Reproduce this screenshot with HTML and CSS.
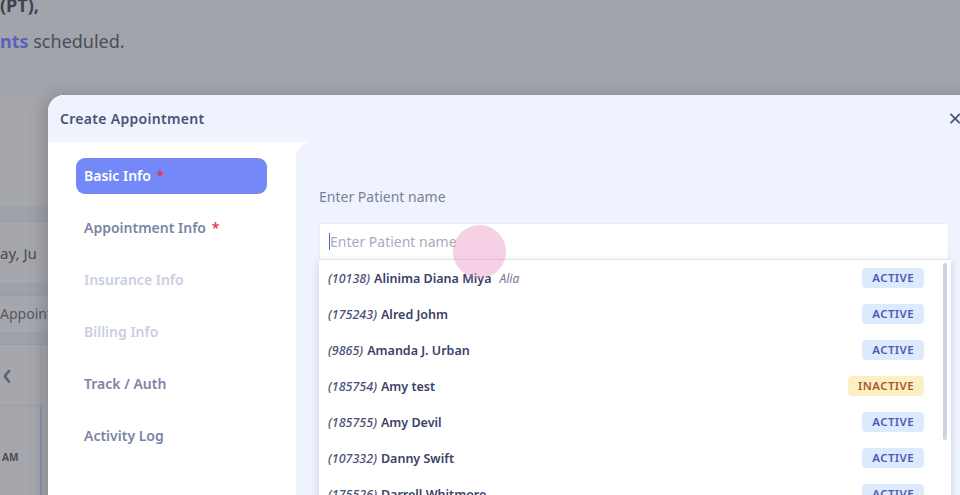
FILE: index.html
```html
<!DOCTYPE html>
<html lang="en">
<head>
    <meta charset="UTF-8">
    <meta name="viewport" content="width=device-width, initial-scale=1.0">
    <title>Create Appointment</title>
    <link rel="stylesheet" href="styles.css">
</head>
<body>

<!-- Page behind the dialog (dimmed) -->
<div class="page">
    <div class="page-top">
        <div class="page-line strong">(PT),</div>
        <div class="page-line"><span class="count">nts</span> scheduled.</div>
    </div>
    <div class="page-strip">
        <div class="strip-band"></div>
        <div class="strip-row date">ay, Ju</div>
        <div class="strip-band thin"></div>
        <div class="strip-row tab">Appoint</div>
        <div class="strip-band thin"></div>
        <div class="strip-nav">&lsaquo;</div>
        <div class="strip-time">
            <span class="time-bar"></span>
            <span class="time-label">AM</span>
        </div>
    </div>
</div>

<!-- Create Appointment dialog -->
<div class="modal">
    <div class="modal-header">
        <h3>Create Appointment</h3>
        <span class="close">&times;</span>
    </div>
    <div class="modal-body">
        <div class="steps">
            <div class="step active">Basic Info <span class="req">*</span></div>
            <div class="step">Appointment Info <span class="req">*</span></div>
            <div class="step disabled">Insurance Info</div>
            <div class="step disabled">Billing Info</div>
            <div class="step">Track / Auth</div>
            <div class="step">Activity Log</div>
        </div>
        <div class="panel">
            <label class="field-label">Enter Patient name</label>
            <div class="search">
                <div class="search-input"><span class="caret"></span><span class="placeholder">Enter Patient name</span></div>
                <span class="tap"></span>
                <div class="results">
                    <div class="result"><span class="pid">(10138)</span><span class="pname">Alinima Diana Miya</span><span class="alias">Alia</span><span class="badge">ACTIVE</span></div>
                    <div class="result"><span class="pid">(175243)</span><span class="pname">Alred Johm</span><span class="badge">ACTIVE</span></div>
                    <div class="result"><span class="pid">(9865)</span><span class="pname">Amanda J. Urban</span><span class="badge">ACTIVE</span></div>
                    <div class="result"><span class="pid">(185754)</span><span class="pname">Amy test</span><span class="badge inactive">INACTIVE</span></div>
                    <div class="result"><span class="pid">(185755)</span><span class="pname">Amy Devil</span><span class="badge">ACTIVE</span></div>
                    <div class="result"><span class="pid">(107332)</span><span class="pname">Danny Swift</span><span class="badge">ACTIVE</span></div>
                    <div class="result"><span class="pid">(175526)</span><span class="pname">Darrell Whitmore</span><span class="badge">ACTIVE</span></div>
                    <span class="scrollbar"></span>
                </div>
            </div>
        </div>
    </div>
</div>

</body>
</html>
```

FILE: styles.css
```css
body {
    font-family: 'Noto Sans', 'Inter', sans-serif;
    margin: 0;
    padding: 0;
    width: 960px;
    height: 495px;
    overflow: hidden;
    background-color: #a4a6ac;
    color: #3d4466;
    position: relative;
}
/* Dimmed page */
.page {
    display: flow-root;
}
.page-top {
    height: 95px;
    background-color: #a1a4ab;
    display: flow-root;
}
.page-line {
    font-size: 18px;
    color: #4b4e57;
    line-height: 24px;
    white-space: nowrap;
}
.page-line.strong {
    font-weight: 700;
    color: #3f4250;
    margin-top: -7px;
}
.page-line + .page-line {
    margin-top: 12px;
}
.count {
    color: #5a62bd;
    font-weight: 700;
}
.page-strip {
    width: 48px;
    overflow: hidden;
    background-color: #a6a7ac;
    height: 400px;
    padding-top: 112px;
    box-sizing: border-box;
}
.strip-band {
    height: 14px;
    background-color: #9da1aa;
    border-bottom: 1px solid #999ca3;
}
.strip-band.thin {
    height: 12px;
}
.strip-row {
    font-size: 15px;
    color: #474a55;
    white-space: nowrap;
    height: 61px;
    line-height: 62px;
}
.strip-row.tab {
    height: 36px;
    line-height: 36px;
    font-size: 14px;
    color: #555864;
}
.strip-nav {
    height: 60px;
    line-height: 56px;
    font-size: 32px;
    color: #5c6170;
    padding-left: 2px;
    border-right: 1px solid #999ca2;
    width: 38px;
    border-bottom: 1px solid #9c9ea4;
}
.strip-time {
    display: flex;
    height: 100px;
}
.time-label {
    order: -1;
    width: 40px;
    font-size: 10px;
    font-weight: 700;
    color: #494c57;
    padding-top: 44px;
    padding-left: 2px;
    box-sizing: border-box;
}
.time-bar {
    width: 2px;
    background-color: #8d93ab;
}
/* Modal */
.modal {
    position: absolute;
    left: 48px;
    top: 95px;
    width: 930px;
    height: 420px;
    background-color: #fff;
    border-radius: 16px 16px 0 0;
    overflow: hidden;
    box-shadow: -6px 0 14px rgba(60, 62, 70, 0.25);
    display: flex;
    flex-direction: column;
}
.modal-header {
    height: 47px;
    background-color: #eef3fd;
    display: flex;
    align-items: center;
    justify-content: space-between;
    padding: 0 16px 0 12px;
    flex-shrink: 0;
}
.modal-header h3 {
    margin: 0;
    font-size: 14px;
    font-weight: 600;
    color: #4b5478;
    letter-spacing: 0.3px;
}
.close {
    font-size: 24px;
    color: #4b5478;
    line-height: 1;
    margin-top: -2px;
}
.modal-body {
    display: flex;
    flex: 1;
}
.steps {
    width: 248px;
    padding: 16px 29px 0 28px;
    box-sizing: border-box;
    display: flex;
    flex-direction: column;
    gap: 16px;
}
.step {
    height: 36px;
    line-height: 36px;
    padding-left: 8px;
    border-radius: 9px;
    font-size: 14px;
    font-weight: 600;
    color: #7b84a6;
    white-space: nowrap;
}
.step.active {
    background-color: #7489f7;
    color: #fff;
}
.step.disabled {
    color: #c9cfe1;
}
.req {
    color: #e0364f;
    margin-left: 2px;
}
.panel {
    flex: 1;
    background-color: #eef3fd;
    border-radius: 16px 0 0 0;
    padding: 45px 29px 0 23px;
}
.field-label {
    display: block;
    font-size: 14px;
    color: #7a809c;
    line-height: 20px;
    margin-bottom: 16px;
}
.search {
    position: relative;
}
.search-input {
    height: 37px;
    background-color: #fff;
    border: 1px solid #e8ecf3;
    box-sizing: border-box;
    display: flex;
    align-items: center;
    padding-left: 9px;
    font-size: 14px;
}
.caret {
    width: 1px;
    height: 17px;
    background-color: #3b6fd8;
}
.placeholder {
    color: #a7acbd;
}
.tap {
    position: absolute;
    left: 134px;
    top: 2px;
    width: 53px;
    height: 53px;
    border-radius: 50%;
    background-color: rgba(236, 150, 196, 0.45);
    z-index: 3;
}
.results {
    position: absolute;
    left: 0;
    right: -2px;
    top: 37px;
    height: 260px;
    background-color: #fff;
    box-shadow: 0 2px 8px rgba(40, 50, 80, 0.18);
    z-index: 2;
}
.result {
    height: 36px;
    display: flex;
    align-items: center;
    padding: 0 27px 0 9px;
    font-size: 12.5px;
    white-space: nowrap;
}
.pid {
    font-style: italic;
    font-weight: 500;
    color: #4a5175;
    margin-right: 4px;
}
.pname {
    font-weight: 600;
    color: #3a4166;
}
.alias {
    font-style: italic;
    color: #737a98;
    font-size: 12px;
    margin-left: 8px;
}
.badge {
    margin-left: auto;
    height: 20px;
    line-height: 20px;
    padding: 0 10px;
    border-radius: 4px;
    background-color: #dde9fd;
    color: #4d5bb0;
    font-size: 11.5px;
    font-weight: 600;
    letter-spacing: 0.4px;
}
.badge.inactive {
    background-color: #fdefc4;
    color: #a4592c;
}
.scrollbar {
    position: absolute;
    right: 4px;
    top: 3px;
    width: 4px;
    height: 177px;
    border-radius: 2px;
    background-color: #cbd3e6;
}
```
